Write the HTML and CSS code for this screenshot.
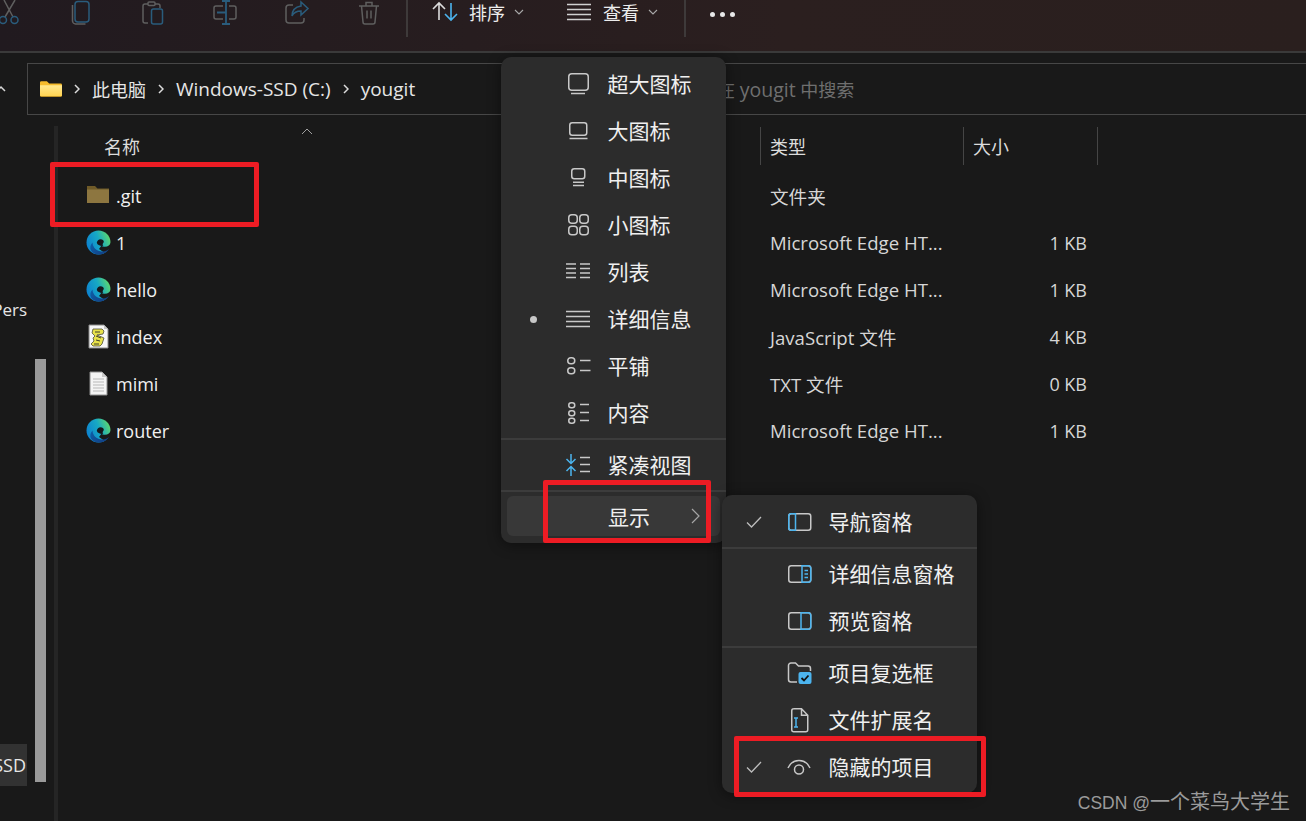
FILE: index.html
```html
<!DOCTYPE html>
<html lang="zh-CN">
<head>
<meta charset="UTF-8">
<meta name="viewport" content="width=device-width, initial-scale=1.0">
<title>yougit</title>
<link rel="stylesheet" href="styles.css">
</head>
<body>

<svg class="defs" width="0" height="0">
    <defs>
        <linearGradient id="edgeRing" x1="0" y1="0.7" x2="1" y2="0.3">
            <stop offset="0" stop-color="#0c7fd0"/>
            <stop offset="0.55" stop-color="#17a9c4"/>
            <stop offset="1" stop-color="#5fd86c"/>
        </linearGradient>
        <linearGradient id="edgeLow" x1="0" y1="0" x2="1" y2="0.6">
            <stop offset="0" stop-color="#0d5fa8"/>
            <stop offset="1" stop-color="#123f85"/>
        </linearGradient>
        <linearGradient id="folderFill" x1="0" y1="0" x2="0" y2="1">
            <stop offset="0" stop-color="#ffe88e"/>
            <stop offset="1" stop-color="#ffd454"/>
        </linearGradient>
        <symbol id="edge" viewBox="0 0 25 25">
            <circle cx="12.500" cy="12.500" r="12" fill="url(#edgeRing)"/>
            <path d="M25 12c-.6 3-3.200 4.800-6 4.800-1.500 0-2.800-.4-3.600-1L13 19l5 3.500 5-2.500 2 0z" fill="#191919"/>
            <path d="M6.500 12.500c.2 5.500 5 9.500 10.500 9 2.300-.2 4.300-1 6-2.500-2 3.500-6 5.500-10.500 5.500-3 0-6-1.500-7.500-4-1.500-2.700-.5-5.800 1.500-8z" fill="url(#edgeLow)"/>
            <path d="M10.800 12.800c.2-2 1.800-3.600 3.800-3.600 1.900 0 3.200 1 3.200 2.400 0 1-.7 1.500-1 2.200-.3.7 0 1.500.5 2-2.500.4-6-.5-6.500-3z" fill="#15171b"/>
        </symbol>
    </defs>
</svg>

<div class="toolbar">
    <div class="tool tool-first">
        <svg class="tool-ico" viewBox="0 0 26 26" fill="none" stroke="#5f5f5f" stroke-width="1.500">
            <path d="M8 0l9 17M19 0L9 17"/>
            <circle cx="7" cy="20" r="3.500" stroke="#2a5c7c"/>
            <circle cx="18.500" cy="20" r="3.500" stroke="#2a5c7c"/>
        </svg>
    </div>
    <div class="tool">
        <svg class="tool-ico" viewBox="0 0 26 26" fill="none" stroke-width="1.500">
            <path d="M4.500 5v16c0 1.500 1.500 3 3 3h10" stroke="#5f5f5f"/>
            <rect x="7" y="1.500" width="14" height="20.500" rx="3" stroke="#2a5c7c"/>
        </svg>
    </div>
    <div class="tool">
        <svg class="tool-ico" viewBox="0 0 26 26" fill="none" stroke-width="1.500">
            <path d="M8 23H5a2 2 0 0 1-2-2V6a2 2 0 0 1 2-2h3M15 4h3a2 2 0 0 1 2 2v2" stroke="#5f5f5f"/>
            <rect x="8" y="2" width="7" height="3.500" rx="1" stroke="#5f5f5f"/>
            <rect x="11.500" y="9" width="11" height="15" rx="2" stroke="#2a5c7c"/>
        </svg>
    </div>
    <div class="tool">
        <svg class="tool-ico" viewBox="0 0 26 26" fill="none" stroke-width="1.500">
            <path d="M11 6H4a2 2 0 0 0-2 2v9a2 2 0 0 0 2 2h7M17 6h5a2 2 0 0 1 2 2v9a2 2 0 0 1-2 2h-5" stroke="#5f5f5f"/>
            <path d="M14 1v23M10 1h8M10 24h8M5 12.500h9" stroke="#2a5c7c" stroke-width="1.800"/>
        </svg>
    </div>
    <div class="tool">
        <svg class="tool-ico" viewBox="0 0 26 26" fill="none" stroke-width="1.500">
            <path d="M9 5H5a3 3 0 0 0-3 3v12a3 3 0 0 0 3 3h12a3 3 0 0 0 3-3v-2" stroke="#5f5f5f"/>
            <path d="M17 2l7 6.500-7 6.500v-4c-4 0-7 1-9 5 0-5 3-9 9-10z" stroke="#2a5c7c"/>
        </svg>
    </div>
    <div class="tool">
        <svg class="tool-ico" viewBox="0 0 26 26" fill="none" stroke="#5f5f5f" stroke-width="1.500">
            <path d="M3 6h20M10 6V2.500h6V6M5.500 6l1.500 16a2 2 0 0 0 2 2h8a2 2 0 0 0 2-2l1.500-16M11 10.500v8M15 10.500v8"/>
        </svg>
    </div>
    <div class="tool-sep"></div>
    <div class="tool-btn tool-sort">
        <svg class="btn-ico" viewBox="0 0 26 26" fill="none" stroke-width="1.600">
            <path d="M7 21V4M1 10l6-6 6 6" stroke="#dcdcdc"/>
            <path d="M19 4v17M13 15l6 6 6-6" stroke="#4cb4ee"/>
        </svg>
        <span class="btn-label">排序</span>
        <svg class="caret" viewBox="0 0 10 6" fill="none" stroke="#a8a8a8" stroke-width="1.100"><path d="M1 1l4 4 4-4"/></svg>
    </div>
    <div class="tool-btn tool-view">
        <svg class="btn-ico" viewBox="0 0 26 26" fill="none" stroke="#d0d0d0" stroke-width="1.300">
            <path d="M1 5.500h24M1 10.500h24M1 15.500h24M1 20.500h24"/>
        </svg>
        <span class="btn-label">查看</span>
        <svg class="caret" viewBox="0 0 10 6" fill="none" stroke="#a8a8a8" stroke-width="1.100"><path d="M1 1l4 4 4-4"/></svg>
    </div>
    <div class="tool-sep tool-sep-last"></div>
    <div class="dots"><i></i><i></i><i></i></div>
</div>

<div class="address-row">
    <svg class="nav-up" viewBox="0 0 10 8" fill="none" stroke="#d8d8d8" stroke-width="1.500"><path d="M-3 6l4-4 4 4"/></svg>
    <div class="address-bar">
        <div class="crumbs">
            <svg class="crumb-folder" viewBox="0 0 24 18">
                <path d="M0 2a1.500 1.500 0 0 1 1.500-1.500h6L10 3h12.500A1.500 1.500 0 0 1 24 4.500V16a1.500 1.500 0 0 1-1.500 1.500h-21A1.500 1.500 0 0 1 0 16z" fill="#f5bb2c"/>
                <path d="M0 5h24v10.500a1 1 0 0 1-1 1H1a1 1 0 0 1-1-1z" fill="url(#folderFill)"/>
            </svg>
            <svg class="crumb-arrow" viewBox="0 0 6 10" fill="none" stroke="#dcdcdc" stroke-width="1.500"><path d="M1 1l4 4-4 4"/></svg>
            <span>此电脑</span>
            <svg class="crumb-arrow" viewBox="0 0 6 10" fill="none" stroke="#dcdcdc" stroke-width="1.500"><path d="M1 1l4 4-4 4"/></svg>
            <span class="crumb-latin">Windows-SSD (C:)</span>
            <svg class="crumb-arrow" viewBox="0 0 6 10" fill="none" stroke="#dcdcdc" stroke-width="1.500"><path d="M1 1l4 4-4 4"/></svg>
            <span class="crumb-latin">yougit</span>
        </div>
        <div class="search-text">在 <span class="latin">yougit</span> 中搜索</div>
    </div>
</div>

<div class="main">
    <div class="sidebar">
        <div class="nav-item nav-pers">Pers</div>
        <div class="nav-item nav-ssd">SSD</div>
        <div class="scroll-thumb"></div>
    </div>

    <div class="files">
        <div class="file-head">
            <div class="head-name">名称
                <svg class="sort-caret" viewBox="0 0 12 7" fill="none" stroke="#a0a0a0" stroke-width="1"><path d="M1 6l5-5 5 5"/></svg>
            </div>
            <div class="head-cell">类型</div>
            <div class="head-cell head-size">大小</div>
        </div>

        <div class="file-row file-row-first">
            <div class="file-name">
                <svg class="file-ico" viewBox="0 0 25 25">
                    <path d="M1 3h8l2.500 2.500H23V20H1z" fill="#6f5a28"/>
                    <path d="M1 6.500h22V20H1z" fill="#8d7640"/>
                </svg>
                <span class="name-text">.git</span>
            </div>
            <div class="file-type">文件夹</div>
            <div class="file-size"></div>
        </div>
        <div class="file-row">
            <div class="file-name">
                <svg class="file-ico"><use href="#edge"/></svg>
                <span class="name-text">1</span>
            </div>
            <div class="file-type">Microsoft Edge HT...</div>
            <div class="file-size">1 KB</div>
        </div>
        <div class="file-row">
            <div class="file-name">
                <svg class="file-ico"><use href="#edge"/></svg>
                <span class="name-text">hello</span>
            </div>
            <div class="file-type">Microsoft Edge HT...</div>
            <div class="file-size">1 KB</div>
        </div>
        <div class="file-row">
            <div class="file-name">
                <svg class="file-ico" viewBox="0 0 25 25">
                    <path d="M3 1h15l4 4v19H3z" fill="#f7f7f7" stroke="#8a8a8a"/>
                    <path d="M18 1v4h4z" fill="#c4c4c4"/>
                    <path d="M7 5h9l2 2-1 3-6 1 7 3-1 3-1 3-2 2H7l-2-2 3-3-1-3 2-2-3-3z" fill="#e8e24a" stroke="#4c4c3a" stroke-width=".8"/>
                    <path d="M9 8h5M10 12l5 2M10 16l4 1M8 20h5" stroke="#3f3f2c"/>
                </svg>
                <span class="name-text">index</span>
            </div>
            <div class="file-type">JavaScript 文件</div>
            <div class="file-size">4 KB</div>
        </div>
        <div class="file-row">
            <div class="file-name">
                <svg class="file-ico" viewBox="0 0 25 25">
                    <path d="M4 1h12l5 5v18H4z" fill="#f4f4f4" stroke="#8f8f8f"/>
                    <path d="M16 1v5h5z" fill="#c9c9c9"/>
                    <path d="M7 8h11M7 11h11M7 14h11M7 17h11M7 20h11" stroke="#b8b8b8"/>
                </svg>
                <span class="name-text">mimi</span>
            </div>
            <div class="file-type">TXT 文件</div>
            <div class="file-size">0 KB</div>
        </div>
        <div class="file-row">
            <div class="file-name">
                <svg class="file-ico"><use href="#edge"/></svg>
                <span class="name-text">router</span>
            </div>
            <div class="file-type">Microsoft Edge HT...</div>
            <div class="file-size">1 KB</div>
        </div>
    </div>
</div>

<!-- 查看 menu -->
<div class="menu menu-view">
    <div class="menu-item"><span class="mark"></span>
        <svg class="ico" viewBox="0 0 26 26"><rect x="3.750" y="2.750" width="19.500" height="16.500" rx="3"/><path d="M6 22.500h14"/></svg>
        <span class="label">超大图标</span></div>
    <div class="menu-item"><span class="mark"></span>
        <svg class="ico" viewBox="0 0 26 26"><rect x="4.750" y="4.750" width="17" height="12.500" rx="2.500"/><path d="M4.500 20.500h18"/></svg>
        <span class="label">大图标</span></div>
    <div class="menu-item"><span class="mark"></span>
        <svg class="ico" viewBox="0 0 26 26"><rect x="6.750" y="3.750" width="13" height="10" rx="2.500"/><path d="M8 17.200h11M8 20.500h11"/></svg>
        <span class="label">中图标</span></div>
    <div class="menu-item"><span class="mark"></span>
        <svg class="ico" viewBox="0 0 26 26"><rect x="3.750" y="2.750" width="8.500" height="8.500" rx="3"/><rect x="14.750" y="2.750" width="8.500" height="8.500" rx="3"/><rect x="3.750" y="14.250" width="8.500" height="8.500" rx="3"/><rect x="14.750" y="14.250" width="8.500" height="8.500" rx="3"/></svg>
        <span class="label">小图标</span></div>
    <div class="menu-item"><span class="mark"></span>
        <svg class="ico" viewBox="0 0 26 26"><path d="M1 5h10M1 9.500h10M1 14h10M1 18.500h10M15 5h10M15 9.500h10M15 14h10M15 18.500h10"/></svg>
        <span class="label">列表</span></div>
    <div class="menu-item"><span class="mark"><i class="bullet"></i></span>
        <svg class="ico" viewBox="0 0 26 26"><path d="M1 5.500h24M1 10.500h24M1 15.500h24M1 20.500h24"/></svg>
        <span class="label">详细信息</span></div>
    <div class="menu-item"><span class="mark"></span>
        <svg class="ico" viewBox="0 0 26 26"><rect x="2.750" y="4.750" width="7" height="6" rx="3"/><rect x="2.750" y="14.750" width="7" height="6" rx="3"/><path d="M15 7.500h10.500M15 17.500h10.500"/></svg>
        <span class="label">平铺</span></div>
    <div class="menu-item"><span class="mark"></span>
        <svg class="ico" viewBox="0 0 26 26"><rect x="3.750" y="2.750" width="6" height="5" rx="2.500"/><rect x="3.750" y="10.750" width="6" height="5" rx="2.500"/><rect x="3.750" y="18.250" width="6" height="5" rx="2.500"/><path d="M15 4.500h9M15 12.500h9M15 20.500h9"/></svg>
        <span class="label">内容</span></div>
    <div class="menu-sep"></div>
    <div class="menu-item"><span class="mark"></span>
        <svg class="ico" viewBox="0 0 26 26"><path class="blue" d="M6 2v9M1.500 7L6 11.500 10.500 7M6 24v-9M1.500 19L6 14.500 10.500 19"/><path d="M15 5.500h10M15 12.500h10M15 19.500h10"/></svg>
        <span class="label">紧凑视图</span></div>
    <div class="menu-sep"></div>
    <div class="menu-item menu-item-open">
        <span class="label">显示</span>
        <svg class="chevron" viewBox="0 0 9 16" fill="none" stroke="#a6a6a6" stroke-width="1.200"><path d="M1 1l7 7-7 7"/></svg>
    </div>
</div>

<!-- 显示 submenu -->
<div class="menu menu-show">
    <div class="menu-item"><span class="mark">
        <svg class="check" viewBox="0 0 16 12" fill="none" stroke="#bdbdbd" stroke-width="1.300"><path d="M1 6.500l4.500 4.500L15 1"/></svg></span>
        <svg class="ico" viewBox="0 0 26 26"><rect x="2.750" y="4.750" width="22" height="16.500" rx="2.500"/><path class="blue" d="M9.500 4.750H5.250a2.500 2.500 0 0 0-2.500 2.500v11.500a2.500 2.500 0 0 0 2.500 2.500H9.500z"/></svg>
        <span class="label">导航窗格</span></div>
    <div class="menu-sep"></div>
    <div class="menu-item"><span class="mark"></span>
        <svg class="ico" viewBox="0 0 26 26"><rect x="2.750" y="4.750" width="22" height="16.500" rx="2.500"/><path class="blue" d="M16 4.750h6.250a2.500 2.500 0 0 1 2.500 2.500v11.500a2.500 2.500 0 0 1-2.500 2.500H16zM18.500 9.500h3.500M18.500 13h3.500M18.500 16.500h3.500"/></svg>
        <span class="label">详细信息窗格</span></div>
    <div class="menu-item"><span class="mark"></span>
        <svg class="ico" viewBox="0 0 26 26"><rect x="2.750" y="4.750" width="22" height="16.500" rx="2.500"/><path class="blue" d="M15 4.750h7.250a2.500 2.500 0 0 1 2.500 2.500v11.500a2.500 2.500 0 0 1-2.500 2.500H15z"/></svg>
        <span class="label">预览窗格</span></div>
    <div class="menu-sep"></div>
    <div class="menu-item"><span class="mark"></span>
        <svg class="ico" viewBox="0 0 26 26"><path d="M11 22H5a2.500 2.500 0 0 1-2.500-2.500v-14A2.500 2.500 0 0 1 5 3h4.500l3 3H22a2.500 2.500 0 0 1 2.500 2.500V11"/><rect class="solid" x="12.500" y="12" width="13" height="12" rx="2"/><path class="tick" d="M15.500 18l2.500 2.500 4.500-5"/></svg>
        <span class="label">项目复选框</span></div>
    <div class="menu-item"><span class="mark"></span>
        <svg class="ico" viewBox="0 0 26 26"><path d="M7.500 1.750h8l6.250 6.500v14.500a2 2 0 0 1-2 2h-12a2 2 0 0 1-2-2v-19a2 2 0 0 1 2-2zM15.500 1.750v6.500h6.250"/><path class="blue" d="M8 11h4M10 11v9M8 20h4"/></svg>
        <span class="label">文件扩展名</span></div>
    <div class="menu-item"><span class="mark">
        <svg class="check" viewBox="0 0 16 12" fill="none" stroke="#bdbdbd" stroke-width="1.300"><path d="M1 6.500l4.500 4.500L15 1"/></svg></span>
        <svg class="ico" viewBox="0 0 26 26"><path d="M2 14C4.500 8.500 8.500 6.500 13 6.500S21.500 8.500 24 14"/><circle cx="13" cy="15.500" r="4.500"/></svg>
        <span class="label">隐藏的项目</span></div>
</div>

<!-- annotation boxes -->
<div class="mark-box box-git"></div>
<div class="mark-box box-show"></div>
<div class="mark-box box-hidden"></div>

<div class="watermark"><span class="watermark-latin">CSDN @</span>一个菜鸟大学生</div>

</body>
</html>
```

FILE: styles.css
```css
* {
    box-sizing: border-box;
}
html, body {
    margin: 0;
    height: 100%;
}
body {
    width: 1306px;
    height: 821px;
    overflow: hidden;
    position: relative;
    background-color: #191919;
    color: #f0f0f0;
    font-family: "Open Sans", "Noto Sans CJK SC", sans-serif;
    font-size: 18px;
}
.defs {
    position: absolute;
}

/* toolbar */
.toolbar {
    height: 53px;
    display: flex;
    align-items: flex-start;
    overflow: hidden;
    background: linear-gradient(90deg, #211a1f, #2b1f1f 60%, #2a1f1e);
    border-bottom: 2px solid #3a3a3a;
}
.tool {
    width: 72px;
    flex: none;
    display: flex;
    justify-content: center;
}
.tool-first {
    margin-left: -27px;
}
.tool-ico {
    width: 26px;
    height: 26px;
}
.tool-sep {
    width: 2px;
    height: 37px;
    flex: none;
    margin-left: 1px;
    background-color: #3e3a3a;
}
.tool-btn {
    display: flex;
    align-items: center;
    height: 24px;
    color: #ececec;
}
.tool-sort {
    margin-left: 24px;
}
.tool-view {
    margin-left: 42px;
}
.btn-ico {
    width: 26px;
    height: 26px;
    flex: none;
}
.btn-label {
    margin-left: 11px;
}
.caret {
    width: 10px;
    height: 6px;
    margin-left: 9px;
}
.tool-sep-last {
    margin-left: 26px;
}
.dots {
    display: flex;
    gap: 5px;
    margin: 12px 0 0 24px;
}
.dots i {
    width: 5px;
    height: 5px;
    border-radius: 50%;
    background-color: #e8e8e8;
}

/* address bar */
.address-row {
    display: flex;
    align-items: center;
    margin-top: 10px;
}
.nav-up {
    width: 10px;
    height: 8px;
    flex: none;
    margin-right: 17px;
}
.address-bar {
    flex: 1;
    height: 52px;
    display: flex;
    align-items: center;
    border: 1px solid #474747;
    border-right: none;
    padding-left: 12px;
}
.crumbs {
    display: flex;
    align-items: center;
    width: 677px;
    flex: none;
    color: #e6e6e6;
}
.crumb-folder {
    width: 22px;
    height: 18px;
}
.crumb-arrow {
    width: 6px;
    height: 10px;
    margin: 0 12px;
}
.crumb-latin {
    font-size: 19px;
    line-height: 1;
}
.latin {
    font-size: 19.500px;
    line-height: 1;
}
.search-text {
    color: #6f6f6f;
}

/* sidebar + file list */
.main {
    display: flex;
    height: 706px;
}
.sidebar {
    width: 54px;
    flex: none;
    position: relative;
}
.nav-item {
    width: 27px;
    overflow: hidden;
    white-space: nowrap;
    direction: rtl;
    text-align: right;
    color: #e6e6e6;
}
.nav-pers {
    margin-top: 182px;
    height: 26px;
    line-height: 26px;
    font-size: 17px;
}
.nav-ssd {
    margin-top: 421px;
    height: 42px;
    line-height: 42px;
    padding-right: 1px;
    background-color: #323232;
}
.scroll-thumb {
    position: absolute;
    left: 35px;
    top: 244px;
    width: 11px;
    height: 423px;
    background-color: #9a9a9a;
}
.files {
    flex: 1;
    margin-top: 11px;
    border-left: 4px solid #252525;
    padding-top: 1px;
}
.file-head, .file-row {
    display: grid;
    grid-template-columns: 702px 203px 135px;
}
.file-head {
    height: 38px;
    color: #dcdcdc;
}
.head-name {
    display: flex;
    align-items: center;
    padding-left: 46px;
}
.sort-caret {
    width: 12px;
    height: 7px;
    margin: -29px 0 0 161px;
}
.head-cell {
    display: flex;
    align-items: center;
    padding-left: 9px;
    border-left: 1px solid #454545;
}
.head-size {
    border-right: 1px solid #454545;
}
.file-row {
    height: 47px;
    align-items: center;
}
.file-row-first {
    margin-top: 7px;
}
.file-name {
    display: flex;
    align-items: center;
    padding-left: 28px;
}
.file-ico {
    width: 25px;
    height: 25px;
    flex: none;
}
.name-text {
    margin-left: 5px;
}
.file-type {
    padding-left: 10px;
    font-size: 18.600px;
    color: #d6d6d6;
}
.file-size {
    text-align: right;
    padding-right: 11px;
    color: #d6d6d6;
}

/* menus */
.menu {
    position: absolute;
    background-color: #2c2c2c;
    border-radius: 10px;
    box-shadow: 0 2px 14px rgba(0, 0, 0, 0.45);
    padding-top: 2px;
    font-size: 21px;
    color: #f0f0f0;
}
.menu-view {
    left: 501px;
    top: 57px;
    width: 225px;
    height: 486px;
}
.menu-show {
    left: 722px;
    top: 495px;
    width: 255px;
    height: 298px;
}
.menu-item {
    height: 47px;
    display: flex;
    align-items: center;
}
.mark {
    width: 64px;
    flex: none;
    display: flex;
    justify-content: center;
    margin-top: 3px;
}
.ico {
    width: 26px;
    height: 26px;
    flex: none;
    margin-top: 3px;
    fill: none;
    stroke: #c8c8c8;
    stroke-width: 1.500;
}
.ico .blue {
    stroke: #4cb4ee;
}
.ico .solid {
    fill: #4cb4ee;
    stroke: none;
}
.ico .tick {
    stroke: #111;
    stroke-width: 1.800;
}
.label {
    margin-left: 16.500px;
}
.bullet {
    width: 7px;
    height: 7px;
    border-radius: 50%;
    background-color: #c8c8c8;
}
.check {
    width: 16px;
    height: 12px;
}
.menu-sep {
    height: 2px;
    background-color: #3c3c3c;
    margin-top: 3px;
}
.menu-item-open {
    height: 40px;
    margin: 4px 6px 0;
    border-radius: 6px;
    background-color: #383838;
    padding-left: 101px;
}
.menu-item-open .label {
    margin-left: 0;
}
.chevron {
    width: 9px;
    height: 16px;
    margin-left: 41px;
}

/* red annotation boxes */
.mark-box {
    position: absolute;
    border: 5px solid #ed1c24;
    border-radius: 2px;
}
.box-git {
    left: 50px;
    top: 162px;
    width: 209px;
    height: 65px;
}
.box-show {
    left: 543px;
    top: 480px;
    width: 168px;
    height: 63px;
}
.box-hidden {
    left: 734px;
    top: 736px;
    width: 252px;
    height: 61px;
}
.watermark {
    position: absolute;
    right: 16px;
    bottom: 6px;
    color: #9b9b9b;
    font-family: "Liberation Sans", "Noto Sans CJK SC", sans-serif;
    font-size: 20px;
    white-space: nowrap;
}
.watermark-latin {
    font-size: 17.500px;
}
```
